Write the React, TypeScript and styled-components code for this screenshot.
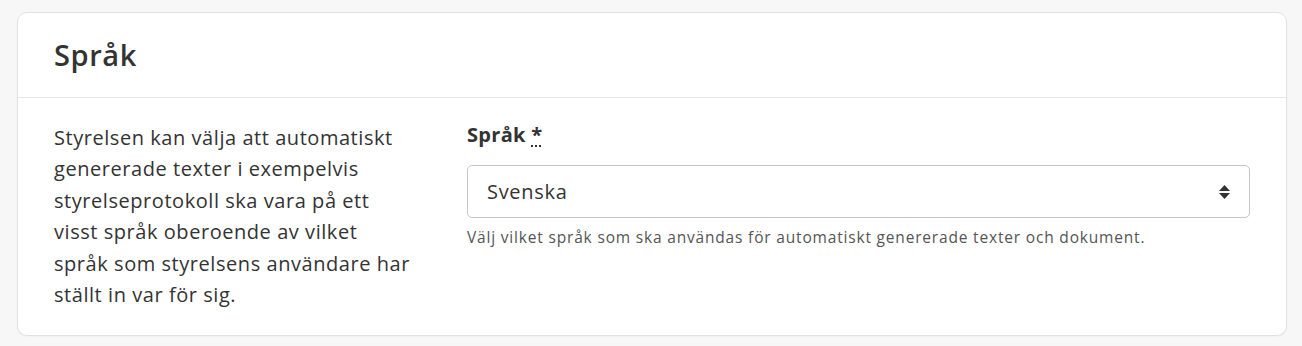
import styled, { createGlobalStyle } from 'styled-components';

const GlobalStyle = createGlobalStyle`
  html, body {
    margin: 0;
    padding: 0;
    background: #f7f7f7;
  }

  body {
    font-family: "Open Sans", "Noto Sans", "Liberation Sans", sans-serif;
    color: #333333;
  }
`;

const Page = styled.div`
  padding: 12px 15px 12px 17px;
`;

const Card = styled.section`
  background: #ffffff;
  border: 1px solid #e2e2e2;
  border-radius: 10px;
  box-shadow: 0 1px 2px rgba(0, 0, 0, 0.03);
`;

const CardHeader = styled.header`
  height: 84px;
  display: flex;
  align-items: center;
  padding: 0 36px;
  border-bottom: 1px solid #e6e6e6;
`;

const Title = styled.h2`
  margin: 0;
  font-size: 29px;
  font-weight: 600;
  letter-spacing: 0.6px;
  color: #333333;
  padding-bottom: 2px;
`;

const CardBody = styled.div`
  display: grid;
  grid-template-columns: 376px 1fr;
  column-gap: 37px;
  padding: 24px 36px 25px 36px;
`;

const Description = styled.p`
  margin: 0;
  max-width: 359px;
  font-size: 20px;
  line-height: 31.4px;
  letter-spacing: 0.55px;
  color: #333333;
`;

const Field = styled.div`
  display: flex;
  flex-direction: column;
  padding-top: 1px;
`;

const Label = styled.label`
  font-size: 20px;
  font-weight: 700;
  letter-spacing: 0.3px;
  color: #333333;
  line-height: 24px;
  margin-bottom: 18px;
`;

const Required = styled.abbr`
  text-decoration: underline dotted;
  text-underline-offset: 3px;
  cursor: help;
`;

const SelectBox = styled.div`
  height: 53px;
  box-sizing: border-box;
  border: 1px solid #c6c6c6;
  border-radius: 5px;
  display: flex;
  align-items: center;
  justify-content: space-between;
  padding: 0 18px 0 19px;
  font-size: 20px;
  letter-spacing: 0.7px;
  color: #333333;
  background: #ffffff;
`;

const Help = styled.div`
  margin-top: 9px;
  font-size: 15.5px;
  line-height: 20px;
  letter-spacing: 0.82px;
  color: #555555;
`;

const SortIcon = () => (
  <svg width="13" height="16" viewBox="0 0 13 16" aria-hidden="true">
    <path d="M6.5 1 L12 7 H1 Z" fill="#333" />
    <path d="M6.5 15 L12 9 H1 Z" fill="#333" />
  </svg>
);

export default function App() {
  return (
    <>
      <GlobalStyle />
      <Page>
        <Card>
          <CardHeader>
            <Title>Språk</Title>
          </CardHeader>
          <CardBody>
            <Description>
              Styrelsen kan välja att automatiskt genererade texter i exempelvis
              styrelseprotokoll ska vara på ett visst språk oberoende av vilket
              språk som styrelsens användare har ställt in var för sig.
            </Description>
            <Field>
              <Label>
                Språk <Required title="obligatoriskt">*</Required>
              </Label>
              <SelectBox>
                <span>Svenska</span>
                <SortIcon />
              </SelectBox>
              <Help>
                Välj vilket språk som ska användas för automatiskt genererade texter och dokument.
              </Help>
            </Field>
          </CardBody>
        </Card>
      </Page>
    </>
  );
}
